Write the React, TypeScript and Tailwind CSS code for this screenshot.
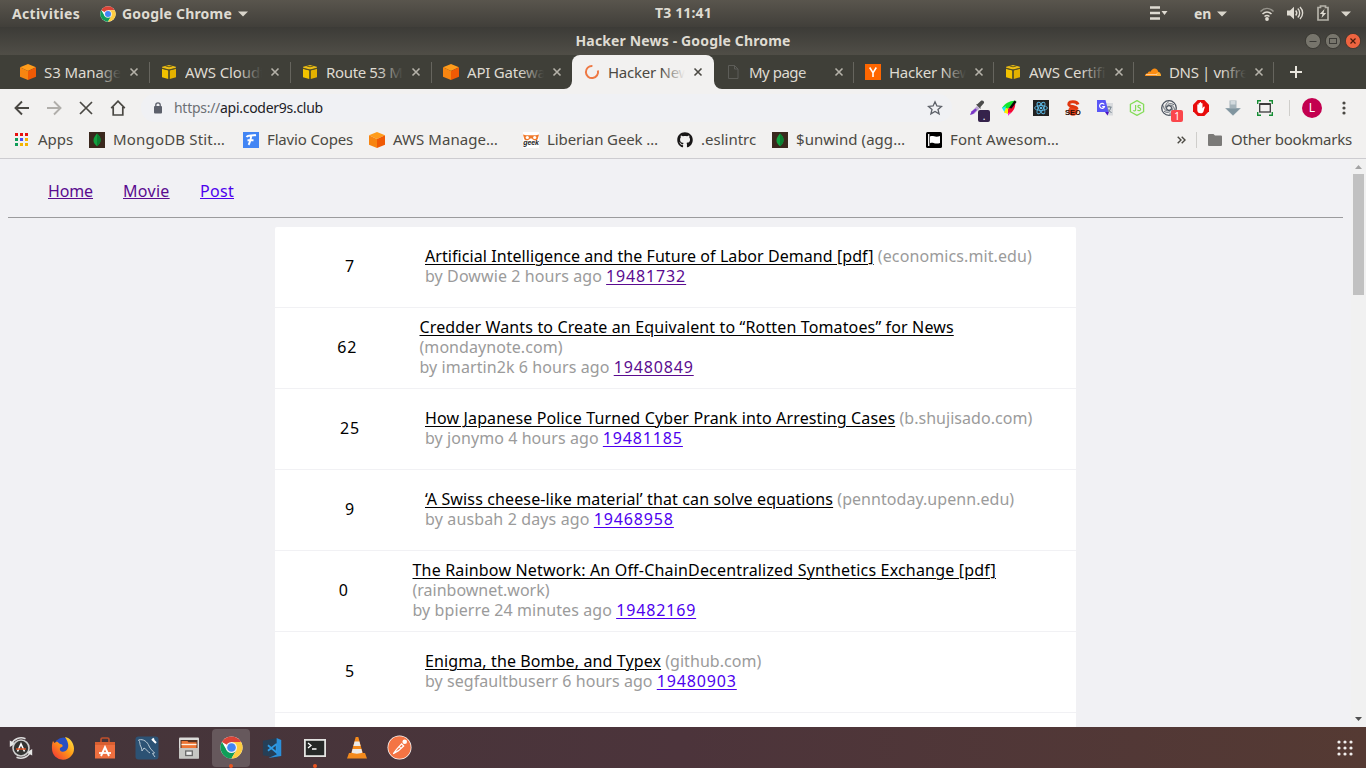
import React from 'react';
import { FaGithub } from 'react-icons/fa';

type P = { children?: React.ReactNode };

const Svg = ({ children, size = 16, className = '' }: P & { size?: number; className?: string }) => (
  <svg width={size} height={size} viewBox="0 0 16 16" className={`block shrink-0 ${className}`}>{children}</svg>
);

const OrangeCube = () => (
  <Svg>
    <path d="M8 0l8 3.2L8 7 0 3.2z" fill="#ff9c1b" />
    <path d="M0 3.2L8 7v9l-8-3.2z" fill="#f78511" />
    <path d="M16 3.2L8 7v9l8-3.2z" fill="#f05a05" />
  </Svg>
);
const YellowCube = () => (
  <Svg>
    <path d="M8 1l6.800 1.800v1.300L8 5.800 1.200 4.100V2.800z" fill="#edbd14" />
    <path d="M1 4.800l6.300 1.600V15L1 13.200z" fill="#f2c200" />
    <path d="M15 4.800L8.700 6.400V15L15 13.200z" fill="#e3b100" />
    <path d="M1 4.300l7 1.600 7-1.600M8 6v9M4.500 1.900L8 2.800l3.500-.9" fill="none" stroke="#56501f" strokeWidth=".9" />
  </Svg>
);
const Spinner = () => (
  <Svg><path d="M8.400 1.900A6.100 6.100 0 1 0 13.900 6.500" fill="none" stroke="#ee7843" strokeWidth="2" /></Svg>
);
const PageIcon = () => (
  <Svg><path d="M3.500 1.500h6l3.500 3.500v9.500h-9.500zM9.500 1.500v3.500h3.500" fill="none" stroke="#5d5d58" /></Svg>
);
const YIcon = () => (
  <Svg><rect width="16" height="16" fill="#ff6600" /><path d="M4.700 3.500L8 8.800l3.300-5.300M8 8.500v4.500" stroke="#fff" strokeWidth="1.600" fill="none" /></Svg>
);
const Cloud = () => (
  <Svg>
    <path d="M0 12c0-2 1.500-3 2.800-2.800C3 7.600 4.600 7 5.500 7.800 6.400 5.600 8.200 4.300 10 4.500c2 .2 3 1.800 3.200 3.300 1.800.3 2.800 2 2.800 4.200z" fill="#fc8d12" />
    <path d="M11 12l1.500-3.800c2-.4 3.500 1.600 3.500 3.800z" fill="#fcad32" />
    <path d="M1 10.600h10.500l.5-1.200" stroke="#fff" strokeWidth=".6" fill="none" />
  </Svg>
);
const Close = ({ className }: { className: string }) => (
  <svg width="10" height="10" viewBox="0 0 10 10" className={`block shrink-0 ${className}`}><path d="M1.500 1.500l7 7M8.500 1.500l-7 7" stroke="currentColor" strokeWidth="1.600" /></svg>
);
const Leaf = () => (
  <Svg>
    <rect width="16" height="16" fill="#3a281d" />
    <path d="M8 1.500C11 4 12 6.500 11.500 9c-.3 2-1.500 3.500-3.200 5H7.700C5.800 12.500 4.600 11 4.500 8.800 4.400 6 6 3.800 8 1.500z" fill="#12a13f" />
    <path d="M8 1.500C11 4 12 6.500 11.500 9c-.3 2-1.500 3.500-3.500 5.500z" fill="#0b7e31" />
  </Svg>
);
const Chrome = ({ size }: { size: number }) => (
  <svg width={size} height={size} viewBox="0 0 48 48" className="block shrink-0">
    <circle cx="24" cy="24" r="23" fill="#fff" />
    <path d="M24 24L4.080 12.500A23 23 0 0 1 43.920 12.500H24z" fill="#db4437" />
    <path d="M4.080 12.500A23 23 0 0 0 24 47L33.960 29.750 24 24 14.040 29.750z" fill="#0f9d58" />
    <path d="M43.920 12.500A23 23 0 0 1 24 47L33.960 29.750 24 12.500z" fill="#ffcd40" />
    <circle cx="24" cy="24" r="11.500" fill="#f1f1f1" />
    <circle cx="24" cy="24" r="9" fill="#4285f4" />
  </svg>
);
const Caret = ({ className = '' }: { className?: string }) => (
  <svg width="10" height="6" viewBox="0 0 10 6" className={`block shrink-0 ${className}`}><path d="M0 .5h10L5 5.500z" fill="#d9d5cb" /></svg>
);

type TabT = { icon: React.ReactNode; title: string; cls: string; sep?: boolean; active?: boolean; width: string };
const tabs: TabT[] = [
  { icon: <OrangeCube />, title: 'S3 Manager', cls: 'tracking-[-0.1px]', sep: true, width: 'w-[142px] pl-[12px]' },
  { icon: <YellowCube />, title: 'AWS Cloudf', cls: 'tracking-[-0.1px]', sep: true, width: 'w-[141px] pl-[11px]' },
  { icon: <YellowCube />, title: 'Route 53 Ma', cls: 'tracking-[-0.35px]', sep: true, width: 'w-[141px] pl-[11px]' },
  { icon: <OrangeCube />, title: 'API Gateway', cls: 'tracking-[-0.2px]', width: 'w-[140px] pl-[11px]' },
  { icon: <Spinner />, title: 'Hacker News', cls: 'tracking-[-0.25px]', active: true, width: 'w-[142px] pl-[12px]' },
  { icon: <PageIcon />, title: 'My page', cls: 'tracking-[-0.5px]', sep: true, width: 'w-[140px] pl-[11px]' },
  { icon: <YIcon />, title: 'Hacker News', cls: 'tracking-[-0.25px]', sep: true, width: 'w-[140px] pl-[11px]' },
  { icon: <YellowCube />, title: 'AWS Certific', cls: 'tracking-[-0.1px]', sep: true, width: 'w-[140px] pl-[11px]' },
  { icon: <Cloud />, title: 'DNS | vnfree', cls: 'tracking-[-0.35px]', sep: true, width: 'w-[140px] pl-[11px]' },
];

function Tab({ t }: { t: TabT }) {
  const fade = t.active ? 'from-[#f2f1f0]/0 to-[#f2f1f0]' : 'from-[#3f3f38]/0 to-[#3f3f38]';
  return (
    <div className={`relative flex h-full shrink-0 items-center ${t.width} ${t.active ? 'rounded-t-lg bg-[#f2f1f0] text-[#4b4943]' : 'text-[#dfdbd2]'}`}>
      {t.active && (
        <>
          <svg width="8" height="8" viewBox="0 0 8 8" className="absolute -left-2 bottom-0"><path d="M8 0v8H0a8 8 0 0 0 8-8z" fill="#f2f1f0" /></svg>
          <svg width="8" height="8" viewBox="0 0 8 8" className="absolute -right-2 bottom-0"><path d="M0 0v8h8a8 8 0 0 1-8-8z" fill="#f2f1f0" /></svg>
        </>
      )}
      {t.icon}
      <div className={`relative ml-2 w-[77px] overflow-hidden whitespace-nowrap pb-px text-[15px] leading-5 ${t.cls}`}>
        {t.title}
        <div className={`absolute inset-y-0 right-0 w-6 bg-gradient-to-r ${fade}`} />
      </div>
      <Close className={`ml-[8px] ${t.active ? 'text-[#4b4943]' : 'text-[#b5b2a9]'}`} />
      {t.sep && <div className="ml-auto h-[21px] w-px bg-[#66655e]" />}
    </div>
  );
}

const Box = ({ children }: P) => <div className="relative flex w-8 shrink-0 justify-center">{children}</div>;

function Extensions() {
  return (
    <div className="flex items-center">
      <Box>
        <Svg>
          <path d="M1.500 14.500l1-3L8 6l2.500 2.500-5.500 5.500z" fill="#b9a6cf" />
          <path d="M1 15l1.500-3.500L6.500 8.500 8 10l-4 4z" fill="#7a35c8" />
          <path d="M7 4.500l1.500-.5L12 .8c1.500-1 3.500.4 3 2.200L11.500 7v2z" fill="#4c4c4c" />
        </Svg>
        <div className="absolute left-[17px] top-[10px] flex h-3 w-3 items-center justify-center rounded-[2px] bg-[#35234b] text-[10px] leading-none text-white">.</div>
      </Box>
      <Box>
        <Svg>
          <path d="M1 8C4 3 10 0 15.500 1L7 9z" fill="#13e52c" />
          <path d="M1 8l4-2-1 4 2-2-2 5z" fill="#18e8ff" />
          <path d="M3 12.500L5 8l3 1-1 5z" fill="#ffec00" />
          <path d="M7 9l7-7c1 4-1 10-7 13z" fill="#f50b30" />
          <path d="M8 8l5.500-7.500 2 1.500-5 6.500z" fill="#0a0a0a" />
          <path d="M7 13l3-1-3 4z" fill="#ff20e0" />
        </Svg>
      </Box>
      <Box>
        <Svg>
          <rect width="16" height="16" fill="#222" />
          <g fill="none" stroke="#5cb8e4" strokeWidth=".9">
            <ellipse cx="8" cy="8" rx="6.400" ry="2.500" />
            <ellipse cx="8" cy="8" rx="6.400" ry="2.500" transform="rotate(60 8 8)" />
            <ellipse cx="8" cy="8" rx="6.400" ry="2.500" transform="rotate(120 8 8)" />
          </g>
          <circle cx="8" cy="8" r="1.300" fill="#5cb8e4" />
        </Svg>
      </Box>
      <Box>
        <Svg>
          <circle cx="8" cy="11" r="4.800" fill="#e8431b" />
          <path d="M13 4.500C12 1 3.800.5 3.800 4.200c0 3.300 8.200 1.300 8.200 5" fill="none" stroke="#e0370f" strokeWidth="3" />
          <text x="8" y="14.500" textAnchor="middle" fontSize="7.500" fontWeight="700" fill="#2a0c04" fontFamily="Liberation Sans, sans-serif">SEO</text>
        </Svg>
      </Box>
      <Box>
        <Svg>
          <path d="M7 3h9v12.500H10z" fill="#d9dbde" />
          <path d="M9.500 7h5M12 6v1M10 12.500c2-1 3.500-3 4-5.500M10.500 8.500c.8 2 2 3 4 4" stroke="#71808b" fill="none" />
          <path d="M0 0h8.500l3 12H0z" fill="#5a57f6" />
          <path d="M8 12h4l-1.500 3.500z" fill="#4a12c0" />
          <path d="M7.200 4.500A2.500 2.500 0 1 0 7.500 6.500H5.200" fill="none" stroke="#fff" strokeWidth="1.200" />
        </Svg>
      </Box>
      <Box>
        <Svg>
          <path d="M8 .6l6.600 3.700v7.400L8 15.400l-6.600-3.700V4.300z" fill="none" stroke="#84dc58" strokeWidth="1.300" />
          <path d="M6.600 5v5c0 1.200-1.800 1.200-2.200.2M11.600 5.800c-1-.9-2.700-.6-2.700.6C8.900 8 11.700 7.200 11.700 9.300c0 1.500-2.300 1.700-3.200.5" fill="none" stroke="#84dc58" strokeWidth="1.200" />
        </Svg>
      </Box>
      <Box>
        <Svg>
          <circle cx="8" cy="8" r="7.300" fill="none" stroke="#4b535f" strokeWidth="1.300" />
          <path d="M8 5.400l2.300 1.300v2.600L8 10.600 5.700 9.300V6.700z" fill="none" stroke="#4b535f" strokeWidth="1.100" />
          <path d="M5.700 6.700C6.500 3.500 10 2.500 13 5M8 5.400c3.300-.9 5.700 1.600 5.300 5M10.300 6.700c2 2.300 1 5.800-2 7.500M10.300 9.300C9.500 12.500 6 13.500 3 11M8 10.600c-3.300.9-5.700-1.600-5.300-5M5.700 9.300c-2-2.300-1-5.800 2-7.500" fill="none" stroke="#4b535f" strokeWidth=".9" />
        </Svg>
        <div className="absolute left-[18px] top-[10px] flex h-3 w-3 items-center justify-center rounded-[2px] bg-[#fb464b] text-[10px] leading-none text-white">1</div>
      </Box>
      <Box>
        <Svg>
          <path d="M4.700 0h6.600L16 4.700v6.600L11.300 16H4.700L0 11.300V4.700z" fill="#e80c0c" />
          <path d="M4.300 8.500V5c0-1 1.300-1 1.300 0V3.500c0-1 1.300-1 1.300 0V2.800c0-1 1.300-1 1.300 0v.9c0-1 1.300-1 1.300 0v4.800l.8-1.500c.5-1 1.800-.6 1.400.5L10.300 12c-.5 1-1.300 1.300-2.500 1.300-2.600 0-3.500-1.300-3.500-3.300z" fill="#fff" />
        </Svg>
      </Box>
      <Box>
        <Svg>
          <path d="M4.500.5h7V8H16l-8 7.700L0 8h4.500z" fill="#a5b3ba" />
          <path d="M5.500 1h5v3.500h-5z" fill="#d3dade" />
          <path d="M1 8.500h14L8 15.200z" fill="#81959f" />
        </Svg>
      </Box>
      <Box>
        <Svg>
          <path d="M.7 4V.7H4M12 .7h3.300V4M15.300 12v3.300H12M4 15.300H.7V12" fill="none" stroke="#178f35" strokeWidth="1.400" />
          <rect x="2.700" y="4" width="10.600" height="8" fill="none" stroke="#3b3b3b" strokeWidth="1.300" />
          <path d="M2.500 4h11" stroke="#3b3b3b" strokeWidth="2" />
        </Svg>
      </Box>
    </div>
  );
}

const bookmarks: { icon: React.ReactNode; label: string; cls: string }[] = [
  { icon: <Leaf />, label: 'MongoDB Stit…', cls: 'w-[154px] tracking-[0.18px]' },
  { icon: <Svg><rect width="16" height="16" fill="#4285f4" /><path d="M3.500 5C5 2.800 8 4 13 3M8.300 3.700C7.500 8 7 11 5.500 12.800M4.500 8.200h6" stroke="#fff" strokeWidth="1.900" fill="none" /></Svg>, label: 'Flavio Copes', cls: 'w-[126px] tracking-[-0.16px]' },
  { icon: <OrangeCube />, label: 'AWS Manage…', cls: 'w-[154px] tracking-[0.06px]' },
  {
    icon: (
      <Svg>
        <rect width="16" height="16" fill="#fff" />
        <path d="M0 2.500l3 .7h10l3-.7-1 3.500c0 3-5 3-6 .5H7C6 9 1 9 1 6z" fill="#f07a2c" />
        <circle cx="4.300" cy="5.500" r="1.600" fill="#fff" /><circle cx="11.700" cy="5.500" r="1.600" fill="#fff" />
        <text x="8" y="13" textAnchor="middle" fontSize="7" fontWeight="700" fontStyle="italic" fill="#222" fontFamily="Liberation Sans, sans-serif">geek</text>
      </Svg>
    ), label: 'Liberian Geek …', cls: 'w-[154px] tracking-[-0.11px]',
  },
  { icon: <FaGithub className="block size-4 shrink-0 text-[#191717]" />, label: '.eslintrc', cls: 'w-[95px]' },
  { icon: <Leaf />, label: '$unwind (agg…', cls: 'w-[154px] tracking-[0.05px]' },
  { icon: <Svg><rect width="16" height="16" rx="1.500" fill="#000" /><path d="M2.700 2v12" stroke="#fff" strokeWidth="1.300" /><path d="M4 4.500c3-1.500 5 1.300 10-.5v7c-5 1.800-7-1.300-10 .3z" fill="#fff" /></Svg>, label: 'Font Awesom…', cls: 'tracking-[0.13px]' },
];

type Story = { score: number; pad: string; title: string; tc: string; site: string; sc: string; by: string; bc: string; id: string; visited?: boolean; wrap?: boolean };
const stories: Story[] = [
  { score: 7, pad: 'w-[150px]', title: 'Artificial Intelligence and the Future of Labor Demand [pdf]', tc: 'tracking-[0.07px]', site: '(economics.mit.edu)', sc: 'tracking-[0.1px]', by: 'by Dowwie 2 hours ago', bc: 'tracking-[0.09px]', id: '19481732', visited: true },
  { score: 62, pad: 'w-[144.5px]', title: 'Credder Wants to Create an Equivalent to “Rotten Tomatoes” for News', tc: 'tracking-[0.14px]', site: '(mondaynote.com)', sc: 'tracking-[0.06px]', by: 'by imartin2k 6 hours ago', bc: 'tracking-[0.09px]', id: '19480849', visited: true, wrap: true },
  { score: 25, pad: 'w-[150px]', title: 'How Japanese Police Turned Cyber Prank into Arresting Cases', tc: 'tracking-[0.14px]', site: '(b.shujisado.com)', sc: 'tracking-[0.04px]', by: 'by jonymo 4 hours ago', bc: 'tracking-[0.07px]', id: '19481185' },
  { score: 9, pad: 'w-[150px]', title: '‘A Swiss cheese-like material’ that can solve equations', tc: 'tracking-[0.13px]', site: '(penntoday.upenn.edu)', sc: 'tracking-[0.05px]', by: 'by ausbah 2 days ago', bc: 'tracking-[0.14px]', id: '19468958' },
  { score: 0, pad: 'w-[137.5px]', title: 'The Rainbow Network: An Off-ChainDecentralized Synthetics Exchange [pdf]', tc: 'tracking-[0.18px]', site: '(rainbownet.work)', sc: 'tracking-[0px]', by: 'by bpierre 24 minutes ago', bc: 'tracking-[0.09px]', id: '19482169', wrap: true },
  { score: 5, pad: 'w-[150px]', title: 'Enigma, the Bombe, and Typex', tc: 'tracking-[0.11px]', site: '(github.com)', sc: 'tracking-[0.05px]', by: 'by segfaultbuserr 6 hours ago', bc: 'tracking-[0.05px]', id: '19480903' },
];

function Row({ s }: { s: Story }) {
  return (
    <div className="flex h-[81px] shrink-0 items-center border-b border-[#f1f1f4] pb-[2px] text-[16px] leading-5 text-black">
      <div className={`shrink-0 text-center tracking-[0.85px] ${s.pad}`}>{s.score}</div>
      <div className="whitespace-nowrap text-[#9b9b9b]">
        <a className={`text-black underline decoration-1 underline-offset-2 ${s.tc}`}>{s.title}</a>
        {s.wrap ? <br /> : ' '}
        <span className={s.sc}>{s.site}</span>
        <br />
        <span className={s.bc}>{s.by}</span>{' '}
        <a className={`tracking-[0.85px] underline decoration-1 underline-offset-2 ${s.visited ? 'text-[#5a0b8f]' : 'text-[#4d00ee]'}`}>{s.id}</a>
      </div>
    </div>
  );
}

const dock: React.ReactNode[] = [
  <svg width="24" height="24" viewBox="0 0 24 24"><path d="M2.500 8a10.500 10.500 0 0 1 14-5.200M21.500 16a10.500 10.500 0 0 1-14 5.200" stroke="#dedede" strokeWidth="1.500" fill="none" /><path d="M.8 4.500V11l5.700-3.500zM23.200 19.500V13l-5.700 3.500z" fill="#e6e6e6" /><circle cx="12" cy="12" r="8" fill="#353433" stroke="#cfcfcf" strokeWidth="1.600" /><path d="M8.500 15.500L12 8l3.500 7.500" stroke="#fff" strokeWidth="1.600" fill="none" /><path d="M7 13h10" stroke="#e95420" strokeWidth="1.400" /></svg>,
  <svg width="24" height="24" viewBox="0 0 24 24"><defs><linearGradient id="fx" x1="1" y1="0" x2="0" y2="1"><stop offset="0" stopColor="#fff04a" /><stop offset=".45" stopColor="#ff9a16" /><stop offset="1" stopColor="#f0283c" /></linearGradient></defs><circle cx="12.500" cy="11" r="9.500" fill="#274fc2" /><path d="M2 5l1.500 2L6 5.500 9 8c2 0 3 1 2.500 2.500L9 12c-1 3 2.500 5 5.500 3 4-2.500 3.500-8-.5-14 5 .5 9 6.500 9 11.500A11 11 0 0 1 1 13C.8 10 1 7 2 5z" fill="url(#fx)" /></svg>,
  <svg width="24" height="24" viewBox="0 0 24 24"><path d="M8 7V3.500c0-1 .7-1.500 1.500-1.500h5c1 0 1.500.5 1.500 1.500V7" fill="none" stroke="#c0502c" strokeWidth="1.700" /><path d="M2 6h20v16.500H2z" fill="#ee6f3f" /><path d="M2 6h20v3H2z" fill="#d95f31" /><path d="M8 20L12 11l4 9" fill="none" stroke="#fff" strokeWidth="1.900" /><path d="M6 17h12" stroke="#fff" strokeWidth="1.700" /></svg>,
  <svg width="24" height="24" viewBox="0 0 24 24"><rect x=".5" y=".5" width="23" height="23" rx="3" fill="#2c5274" /><path d="M3.500 4c5-1.500 9 2 10.500 6 1.200 3 4 5 5.500 7l-2 .5 2.500 3.500M3.500 4c2 2 1 4 2 6 1 1 1 3 1.500 5l2-3c2 1 4 4 6 5" fill="none" stroke="#bccbd7" strokeWidth="1" /><path d="M17 3l4 4M19 2.500l-1.500 1.500" stroke="#fff" strokeWidth="2" /></svg>,
  <svg width="24" height="24" viewBox="0 0 24 24"><rect x="2" y="1.500" width="20" height="21" rx="1" fill="#dcdcda" /><rect x="3.500" y="4" width="17" height="8" fill="#573322" /><path d="M4.500 5h6l1 1.200h8V12h-15z" fill="#ee7534" /><path d="M4.500 8.500h15" stroke="#fff0df" strokeWidth="1.300" /><rect x="2" y="12" width="20" height="10.500" fill="#c6c6c3" /><rect x="8.700" y="15" width="6.600" height="4.500" fill="#eee" stroke="#686868" strokeWidth="1.300" /></svg>,
  <Chrome size={23} />,
  <svg width="22" height="22" viewBox="0 0 24 24"><path d="M1 4l16-3v22L1 20z" fill="#253f57" /><path d="M16 7.500L6.500 15M6.500 9l9.500 8V7" fill="none" stroke="#2e9be5" strokeWidth="2" /><path d="M16 1l5 2.300v17.400L7 23l9-4z" fill="#2b90da" /></svg>,
  <svg width="24" height="24" viewBox="0 0 24 24"><rect x="1" y="3" width="22" height="18" fill="#e3e3e1" /><rect x="2.800" y="4.800" width="18.400" height="14.400" fill="#252827" /><path d="M5 7l3 2.500L5 12M9 13h4.500" fill="none" stroke="#fff" strokeWidth="1.300" /></svg>,
  <svg width="24" height="24" viewBox="0 0 24 24"><path d="M4 17h16l2 5.500H2z" fill="#f28a1d" /><path d="M10.700 1h2.600L18 18c-2 2-10 2-12 0z" fill="#f58a1c" /><path d="M9.600 5.500h4.800l1.200 4.500H8.400zM7.600 13h8.800l1 3.500c-2 1.500-9 1.500-10.800 0z" fill="#ecebea" /></svg>,
  <svg width="25" height="25" viewBox="0 0 24 24"><circle cx="12" cy="12" r="11.500" fill="#fff" /><circle cx="12" cy="12" r="10.800" fill="#f47444" /><circle cx="17" cy="6.500" r="2.200" fill="#fff" /><path d="M6 18l3-4 5-5.500 2 2-5 4.500z" fill="none" stroke="#fff" strokeWidth="1.200" /><path d="M11.500 11l1.800 1.800" stroke="#fff" /></svg>,
];

export default function App() {
  return (
    <div className="flex h-[768px] w-[1366px] flex-col overflow-hidden font-['Noto_Sans',sans-serif]">
      <div className="relative flex h-[27px] shrink-0 items-center bg-gradient-to-b from-[#59554d] to-[#413f3a] pl-3 text-[14px] font-bold leading-5 text-[#dfdbd2]">
        <span className="w-[88px] tracking-[0.3px]">Activities</span>
        <Chrome size={16} />
        <span className="ml-[6px] whitespace-nowrap tracking-[0.19px]">Google Chrome</span>
        <Caret className="ml-[6px]" />
        <span className="ml-[407px] w-[493px] pb-px tracking-[0.16px]">T3 11:41</span>
        <svg width="20" height="14" viewBox="0 0 20 14" className="mb-px ml-px block shrink-0"><path d="M1 1.500h10M1 7h10M1 12.500h10" stroke="#dfdbd2" strokeWidth="2.400" /><path d="M12.500 5h6L15.500 9z" fill="#dfdbd2" /></svg>
        <span className="ml-[25px]">en</span>
        <Caret className="ml-[6px]" />
        <svg width="16" height="16" viewBox="0 0 16 16" className="ml-[32px] block shrink-0"><path d="M1.500 5.500c4-4 9-4 13 0" stroke="#96938b" strokeWidth="1.600" fill="none" /><path d="M3.500 8c3-2.700 6-2.700 9 0M5.500 10.500c1.700-1.400 3.300-1.400 5 0" stroke="#dfdbd2" strokeWidth="1.600" fill="none" /><circle cx="8" cy="13" r="1.900" fill="#dfdbd2" /></svg>
        <svg width="17" height="14" viewBox="0 0 17 14" className="mb-px ml-[12px] block shrink-0"><path d="M0 4.500h3L7 .8v12.400L3 9.500H0z" fill="#dfdbd2" /><path d="M8.700 4.500c1.300 1.500 1.300 3.500 0 5M10.800 2.500c2.500 2.500 2.500 6.500 0 9M13 1c3.500 3.500 3.500 8.500 0 12" stroke="#dfdbd2" strokeWidth="1.400" fill="none" /></svg>
        <svg width="12" height="16" viewBox="0 0 12 16" className="mb-px ml-[13px] block shrink-0"><path d="M1 2.500h2.500V1h5v1.500H11V15H1z" fill="none" stroke="#b5b2a9" strokeWidth="1.700" /><path d="M7.500 4L2.800 9h2.700L4.500 13 9.200 8H6.500z" fill="#dfdbd2" /></svg>
        <Caret className="ml-[12px]" />
      </div>

      <div className="relative flex h-[28px] shrink-0 items-center justify-center bg-gradient-to-b from-[#3c3b37] to-[#504e47] text-[14px] font-bold leading-5 text-[#dfdbd2]">
        <span className="tracking-[0.15px]">Hacker News - Google Chrome</span>
        <div className="absolute right-[5px] top-[6px] flex gap-1">
          <Svg><circle cx="8" cy="8" r="7.600" fill="#77756c" stroke="#35342f" strokeWidth=".8" /><path d="M4.500 8.500h7" stroke="#3c3b37" /></Svg>
          <Svg><circle cx="8" cy="8" r="7.600" fill="#77756c" stroke="#35342f" strokeWidth=".8" /><rect x="4.500" y="5.500" width="7" height="5" fill="none" stroke="#3c3b37" /></Svg>
          <Svg><circle cx="8" cy="8" r="7.600" fill="#ee6440" stroke="#35342f" strokeWidth=".8" /><path d="M5.500 5.500l5 5m0-5l-5 5" stroke="#4a1c0c" strokeWidth="1.200" /></Svg>
        </div>
      </div>

      <div className="flex h-[34px] shrink-0 items-center bg-[#3f3f38] pl-2">
        {tabs.map((t, i) => <Tab key={i} t={t} />)}
        <svg width="12" height="12" viewBox="0 0 12 12" className="ml-4 block"><path d="M6 0v12M0 6h12" stroke="#e8e5dd" strokeWidth="2" /></svg>
      </div>

      <div className="flex h-[37px] shrink-0 items-center bg-[#f2f1f0] pl-[14px] text-[#4a4843]">
        <Svg><path d="M15 8H2M8 1.500L1.500 8 8 14.500" fill="none" stroke="currentColor" strokeWidth="1.900" /></Svg>
        <Svg className="ml-4 text-[#b0aeaa]"><path d="M1 8h13M8 1.500L14.500 8 8 14.500" fill="none" stroke="currentColor" strokeWidth="1.900" /></Svg>
        <Svg className="ml-4"><path d="M2 2l12 12M14 2L2 14" stroke="currentColor" strokeWidth="1.700" /></Svg>
        <Svg className="ml-4"><path d="M1.200 8.200L8 1.200l6.800 7M3.200 7v8h9.600V7" fill="none" stroke="currentColor" strokeWidth="1.700" /></Svg>
        <div className="ml-[15px] flex h-[28px] w-[811px] items-center rounded-full bg-[#f0f1f4] pl-[13px]">
          <svg width="8" height="12" viewBox="0 0 8 12" className="block"><rect y="4" width="8" height="7.500" rx="1" fill="#5c606b" /><path d="M1.800 4.500V3a2.200 2.200 0 0 1 4.400 0v1.500" fill="none" stroke="#5c606b" strokeWidth="1.300" /></svg>
          <span className="ml-[12px] text-[14px] leading-5 tracking-[-0.28px] text-[#6d7075]">https://<span className="text-[#222126]">api.coder9s.club</span></span>
          <Svg className="ml-auto mr-[9px]"><path d="M8 1.800l1.900 4.200 4.600.4-3.500 3 1.100 4.500L8 11.500l-4.100 2.400L5 9.400l-3.500-3 4.600-.4z" fill="none" stroke="#5c6068" strokeWidth="1.300" /></Svg>
        </div>
        <div className="ml-[9px]"><Extensions /></div>
        <div className="ml-[8px] h-4 w-px bg-[#cfcecb]" />
        <div className="ml-3 flex size-5 items-center justify-center rounded-full bg-[#c3004f] text-[12px] leading-none text-white">L</div>
        <svg width="4" height="14" viewBox="0 0 4 14" className="ml-5 block"><circle cx="2" cy="2" r="1.600" fill="#4a4843" /><circle cx="2" cy="7" r="1.600" fill="#4a4843" /><circle cx="2" cy="12" r="1.600" fill="#4a4843" /></svg>
      </div>

      <div className="flex h-[33px] shrink-0 items-center border-b border-[#cdccd0] bg-[#f2f1f0] pb-[5px] pl-[15px] text-[15px] leading-5 text-[#4b4943]">
        <svg width="13" height="13" viewBox="0 0 13 13" className="block shrink-0">
          <path d="M0 0h3v3H0zM5 0h3v3H5zM10 0h3v3h-3z" fill="#e8110f" />
          <path d="M0 5h3v3H0zM0 10h3v3H0z" fill="#0f9d58" /><path d="M5 5h3v3H5z" fill="#4a50f5" />
          <path d="M10 5h3v3h-3zM5 10h3v3H5zM10 10h3v3h-3z" fill="#f4b400" />
        </svg>
        <span className="ml-[10px] w-[51px] pb-[2px]">Apps</span>
        {bookmarks.map((b) => (
          <div key={b.label} className={`flex shrink-0 items-center gap-2 whitespace-nowrap ${b.cls}`}>{b.icon}<span className="pb-[2px]">{b.label}</span></div>
        ))}
        <svg width="9" height="8" viewBox="0 0 9 8" className="ml-auto mr-px block"><path d="M.7.7L4 4 .7 7.300M4.700.7L8 4 4.700 7.300" fill="none" stroke="#4b4943" strokeWidth="1.400" /></svg>
        <div className="ml-[9px] h-4 w-px bg-[#cfcecb]" />
        <svg width="14" height="12" viewBox="0 0 14 12" className="ml-[11px] block"><path d="M1 0h4.500L7 1.500h6a1 1 0 0 1 1 1V11a1 1 0 0 1-1 1H1a1 1 0 0 1-1-1V1a1 1 0 0 1 1-1z" fill="#7b7a78" /></svg>
        <span className="ml-[9px] mr-[14px] pb-[2px] tracking-[-0.21px]">Other bookmarks</span>
      </div>

      <div className="flex min-h-0 flex-1 bg-[#f1f1f4]">
        <div className="flex min-w-0 flex-1 flex-col overflow-hidden px-2">
          <nav className="flex h-[58px] shrink-0 gap-[30px] pl-10 pt-[22px] text-[16px] leading-5">
            <a className="w-[45px] tracking-[-0.13px] text-[#5a0b8f] underline decoration-1 underline-offset-1">Home</a>
            <a className="w-[47px] tracking-[0.3px] text-[#5a0b8f] underline decoration-1 underline-offset-1">Movie</a>
            <a className="tracking-[0.3px] text-[#4d00ee] underline decoration-1 underline-offset-1">Post</a>
          </nav>
          <div className="h-px shrink-0 bg-[#9b9b9d]" />
          <div className="mx-auto mt-[9px] w-[801px] rounded-t-[2px] bg-white">
            {stories.map((s) => <Row key={s.id} s={s} />)}
            <div className="h-10" />
          </div>
        </div>
        <div className="flex w-[15px] shrink-0 flex-col items-center bg-[#f1f1f1] pt-[6px]">
          <svg width="7" height="4" viewBox="0 0 7 4" className="block shrink-0"><path d="M3.500 0L7 4H0z" fill="#a3a3a3" /></svg>
          <div className="mt-[5px] h-[121px] w-[11px] shrink-0 bg-[#c1c1c1]" />
          <svg width="7" height="4" viewBox="0 0 7 4" className="mb-[6px] mt-auto block shrink-0"><path d="M0 0h7L3.500 4z" fill="#505050" /></svg>
        </div>
      </div>

      <div className="flex h-[41px] shrink-0 items-center bg-gradient-to-r from-[#44353a] via-[#4c343b] to-[#553a33]">
        {dock.map((d, i) => (
          <div key={i} className={`relative mx-[2px] flex h-[38px] w-[38px] shrink-0 items-center justify-center rounded ${i === 5 ? 'bg-[#66585c]' : ''}`}>
            {d}
            {(i === 5 || i === 7) && <div className="absolute -bottom-px left-[17px] size-[4px] rounded-full bg-[#e95420]" />}
          </div>
        ))}
        <svg width="16" height="16" viewBox="0 0 16 16" className="ml-auto mr-[13px] block">
          {[2, 8, 14].flatMap((y) => [2, 8, 14].map((x) => <circle key={`${x}-${y}`} cx={x} cy={y} r="1.600" fill="#f2efee" />))}
        </svg>
      </div>
    </div>
  );
}
